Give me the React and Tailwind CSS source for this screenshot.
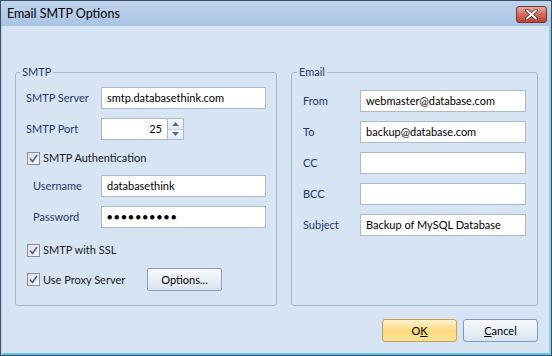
function Check({ label }) {
  return (
    <div className="flex items-center h-[14px]">
      <div className="w-[13px] h-[13px] border border-[#8e8f99] bg-gradient-to-br from-[#dcdfe6] to-[#f7f8fa] flex items-center justify-center">
        <svg width="9" height="9" viewBox="0 0 9 9">
          <path d="M1 4.5 L3.5 7.5 L8 1" fill="none" stroke="#4d6185" strokeWidth="1.6" />
        </svg>
      </div>
      <span className="ml-[3px] text-[#1b1b1b]">{label}</span>
    </div>
  );
}

function Field({ label, value, labelW, inputW }) {
  return (
    <div className="flex items-center h-[22px]">
      <span className={`${labelW} text-[#1e3a6a]`}>{label}</span>
      <div className={`${inputW} h-[22px] bg-white border border-[#abb9cd] flex items-center px-[5px] text-black`}>
        {value}
      </div>
    </div>
  );
}

function Spinner() {
  return (
    <div className="w-[16px] h-[22px] flex flex-col border border-l-0 border-[#abb9cd] bg-[#eef3f9]">
      <div className="flex-1 flex items-center justify-center border-b border-[#c4d0df] bg-gradient-to-b from-[#f6f9fc] to-[#e3eaf3]">
        <svg width="7" height="4" viewBox="0 0 7 4"><path d="M0 4 L3.5 0 L7 4Z" fill="#4f6d98" /></svg>
      </div>
      <div className="flex-1 flex items-center justify-center bg-gradient-to-b from-[#f6f9fc] to-[#e3eaf3]">
        <svg width="7" height="4" viewBox="0 0 7 4"><path d="M0 0 L3.5 4 L7 0Z" fill="#4f6d98" /></svg>
      </div>
    </div>
  );
}

export default function App() {
  return (
    <div className="w-[552px] h-[356px] border border-[#3a4c63] flex flex-col font-['Lato',sans-serif] text-[11px] leading-[14px] bg-[#d6e4f4]">
      {/* title bar */}
      <div className="h-[25px] shrink-0 flex items-center justify-between pl-[6px] pr-[4px] bg-gradient-to-b from-[#bfd4ed] to-[#a9c3e3]">
        <span className="text-[12.5px] text-black">Email SMTP Options</span>
        <div className="w-[31px] h-[17px] mt-[1px] rounded-[3px] border border-[#6b3b35] bg-gradient-to-b from-[#e8a99f] via-[#d16a58] to-[#c0422c] flex items-center justify-center">
          <svg width="13" height="11" viewBox="0 0 13 11">
            <path d="M2 1.5 L11 9.5 M11 1.5 L2 9.5" stroke="#4a2a25" strokeWidth="3.6" strokeLinecap="round" />
            <path d="M2 1.5 L11 9.5 M11 1.5 L2 9.5" stroke="#ffffff" strokeWidth="2" strokeLinecap="round" />
          </svg>
        </div>
      </div>

      {/* body */}
      <div className="flex-1 flex flex-col border-l-[2px] border-l-[#c9dbef] border-r-[2px] border-r-[#8fd0e8] border-b-[2px] border-b-[#5fc6e4]">
        <div className="flex pt-[46px] pl-[12px] gap-[14px]">
          {/* SMTP group */}
          <div className="relative w-[262px] h-[234px] border border-[#a6b5ca] rounded-[3px] pt-[14px] pl-[10px]">
            <span className="absolute -top-[8px] left-[4px] px-[2px] bg-[#d6e4f4] text-[#1e3a6a]">SMTP</span>
            <Field label="SMTP Server" value="smtp.databasethink.com" labelW="w-[75px]" inputW="w-[165px]" />
            <div className="flex items-center h-[22px] mt-[9px]">
              <span className="w-[75px] text-[#1e3a6a]">SMTP Port</span>
              <div className="w-[67px] h-[22px] bg-white border border-[#abb9cd] flex items-center justify-end pr-[5px] text-black">25</div>
              <Spinner />
            </div>
            <div className="mt-[11px] pl-[1px]">
              <Check label="SMTP Authentication" />
            </div>
            <div className="flex items-center h-[22px] mt-[10px]">
              <span className="w-[75px] pl-[7px] text-[#1e3a6a]">Username</span>
              <div className="w-[165px] h-[22px] bg-white border border-[#abb9cd] flex items-center px-[5px] text-black">databasethink</div>
            </div>
            <div className="flex items-center h-[22px] mt-[9px]">
              <span className="w-[75px] pl-[7px] text-[#1e3a6a]">Password</span>
              <div className="w-[165px] h-[22px] bg-white border border-[#abb9cd] flex items-center px-[5px] text-black text-[9px] tracking-[1.7px]">●●●●●●●●●●</div>
            </div>
            <div className="mt-[15px] pl-[1px]">
              <Check label="SMTP with SSL" />
            </div>
            <div className="flex items-center h-[23px] mt-[11px] pl-[1px]">
              <div className="w-[120px]">
                <Check label="Use Proxy Server" />
              </div>
              <button className="w-[75px] h-[23px] rounded-[2px] border border-[#8b9fbd] bg-gradient-to-b from-[#f8fafd] to-[#dbe4ef] text-black">
                Options...
              </button>
            </div>
          </div>

          {/* Email group */}
          <div className="relative w-[247px] h-[234px] border border-[#a6b5ca] rounded-[3px] pt-[17px] pl-[11px] flex flex-col gap-[9px]">
            <span className="absolute -top-[8px] left-[5px] px-[2px] bg-[#d6e4f4] text-[#1e3a6a]">Email</span>
            <Field label="From" value="webmaster@database.com" labelW="w-[57px]" inputW="w-[166px]" />
            <Field label="To" value="backup@database.com" labelW="w-[57px]" inputW="w-[166px]" />
            <Field label="CC" value="" labelW="w-[57px]" inputW="w-[166px]" />
            <Field label="BCC" value="" labelW="w-[57px]" inputW="w-[166px]" />
            <Field label="Subject" value="Backup of MySQL Database" labelW="w-[57px]" inputW="w-[166px]" />
          </div>
        </div>

        {/* buttons */}
        <div className="flex justify-end gap-[6px] mt-[13px] pr-[11px]">
          <button className="w-[75px] h-[23px] rounded-[3px] border border-[#c4a055] bg-gradient-to-b from-[#fff3cf] via-[#fdd97c] to-[#fce396] text-black">
            O<span className="underline">K</span>
          </button>
          <button className="w-[75px] h-[23px] rounded-[3px] border border-[#8099c0] bg-gradient-to-b from-[#f7fafd] to-[#dae4f0] text-black">
            <span className="underline">C</span>ancel
          </button>
        </div>
      </div>
    </div>
  );
}
